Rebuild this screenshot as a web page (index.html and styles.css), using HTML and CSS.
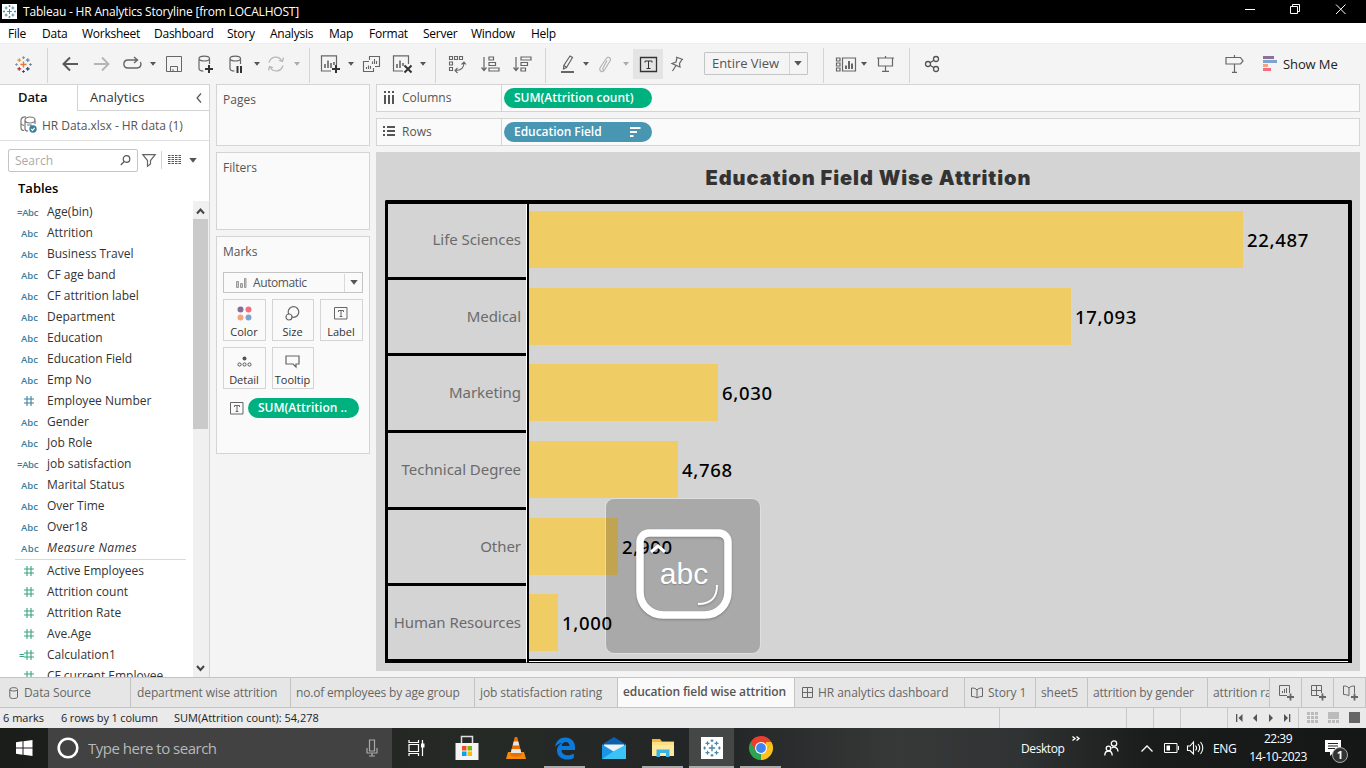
FILE: index.html
```html
<!DOCTYPE html>
<html lang="en">
<head>
<meta charset="utf-8">
<title>Tableau - HR Analytics Storyline</title>
<link rel="stylesheet" href="styles.css">
</head>
<body>
<svg class="defs" width="0" height="0">
  <symbol id="caret" viewBox="0 0 6 4"><path d="M0 0h6L3 3.8z" fill="currentColor"/></symbol>
  <symbol id="hash" viewBox="0 0 12 12"><path d="M4 1v10M8 1v10M1 4h10M1 8h10" stroke="currentColor" stroke-width="1.1" fill="none"/></symbol>
  <symbol id="tbox" viewBox="0 0 14 13"><path d="M.5.5h12.5v11.5H.5zM4.500 5V3.500h5V5M7 3.500v6M5.700 9.500h2.600" fill="none" stroke="currentColor"/></symbol>
  <symbol id="mark" viewBox="0 0 18 18"><g fill="none" stroke-width="1.200"><path d="M9 5.800v6.400M5.800 9h6.400" stroke="var(--c1)" stroke-width="1.400"/><path d="M4.500 2.300v4M2.500 4.300h4" stroke="var(--c2)"/><path d="M9 .3v2.800M7.600 1.700h2.800M1.600 7.600v2.800M.2 9H3" stroke="var(--c3)"/><path d="M13.500 2.300v4M11.500 4.300h4M16.400 7.600v2.800M15 9h2.800" stroke="var(--c6)"/><path d="M13.500 11.700v4M11.500 13.700h4M9 15v2.800M7.600 16.400h2.800" stroke="var(--c4)"/><path d="M4.500 11.700v4M2.500 13.700h4" stroke="var(--c5)"/></g></symbol>
  <symbol id="cyl" viewBox="0 0 16 19"><path d="M1 3.500C1 .2 11.500.2 11.500 3.500S1 6.800 1 3.500v10c0 2 2 2.500 4.500 2.500M11.500 3.500V9" fill="none" stroke="currentColor" stroke-width="1.200"/></symbol>
</svg>

<header class="titlebar">
  <svg class="app-ico" width="15" height="15" viewBox="-1 -1 20 20"><rect x="-1" y="-1" width="20" height="20" fill="#fff"/><use href="#mark" width="18" height="18"/></svg>
  <span class="title">Tableau - HR Analytics Storyline [from LOCALHOST]</span>
  <svg class="winctl" width="104" height="12" viewBox="0 0 104 12" fill="none" stroke="#fff"><path d="M0 5.500h10M45.500 2.500h7v7h-7zM47.500 2V.5h7v7H53M91 .5l9.500 9.500M100.500.5L91 10"/></svg>
</header>

<nav class="menubar">
  <span>File</span><span>Data</span><span>Worksheet</span><span>Dashboard</span><span>Story</span><span>Analysis</span><span>Map</span><span>Format</span><span>Server</span><span>Window</span><span>Help</span>
</nav>

<div class="toolbar">
  <svg class="logo-color" width="17" height="17"><use href="#mark" width="17" height="17"/></svg>
  <i class="sep"></i>
  <svg width="16" height="16" fill="none" stroke="#595959" stroke-width="2"><path d="M16 8H1M8 1.500L1.500 8 8 14.500"/></svg>
  <svg width="16" height="16" fill="none" stroke="#b4b4b4" stroke-width="1.800"><path d="M0 8h15M8 1.500L14.500 8 8 14.500"/></svg>
  <svg width="19" height="16" fill="none" stroke="#666" stroke-width="1.400"><path d="M14 4H5C-.5 4-.5 12 5 12h9c4 0 4.500-4 3.400-6M11 1l3.500 3L11 7"/></svg>
  <svg class="car"><use href="#caret"/></svg>
  <svg width="16" height="16" fill="none" stroke="#666"><path d="M.5.500h15v15H.5zM4.500 15.500v-5h7v5M7 15.500v-2.500"/></svg>
  <svg width="16" height="19" color="#666"><use href="#cyl"/><path d="M7 14h8M11 10v8" stroke="#333" stroke-width="2"/></svg>
  <svg width="16" height="19" color="#666"><use href="#cyl"/><path d="M8.500 11v7M12 11v7" stroke="#333" stroke-width="2"/></svg>
  <svg class="car"><use href="#caret"/></svg>
  <svg width="18" height="16" fill="none" stroke="#b8b8b8" stroke-width="1.300"><path d="M2 6.500C4-.5 12-.5 15 5M16 9.500c-2 7-10 7-13 1.500M16.500 1.500L15.500 5.500 12 4.500M1.500 14.500L2.500 10.500 6 11.500"/></svg>
  <svg class="car dim"><use href="#caret"/></svg>
  <i class="sep"></i>
  <svg width="19" height="18" fill="none" stroke="#666"><path d="M10 16H.5V.8h15V10" stroke-width="1.200"/><path d="M4 13V9M7 13V5.500M10 13V8M13 10V7" stroke-width="1.600"/><path d="M11 14h8M15 10v8" stroke="#333" stroke-width="2"/></svg>
  <svg class="car"><use href="#caret"/></svg>
  <svg width="18" height="17" fill="none" stroke="#666"><path d="M6.500 4V.5h10v10H12M6 5.500H.5v10h10V12M3.500 13v-2M5.500 13V9.500M7.500 13v-3M9.500 8V5.500M11.500 8V3M13.500 8V5" stroke-width="1.100"/></svg>
  <svg width="19" height="18" fill="none" stroke="#666"><path d="M10 16H.5V.8h15V9" stroke-width="1.200"/><path d="M4 13V9M7 13V5.500M10 11V8" stroke-width="1.600"/><path d="M11.500 10.500l7 7M18.500 10.500l-7 7" stroke="#333" stroke-width="2"/></svg>
  <svg class="car"><use href="#caret"/></svg>
  <i class="sep"></i>
  <svg width="18" height="18" fill="none" stroke="#666" stroke-width="1.100"><path d="M1.500 1.500h3v3h-3zM6.500 1.500h3v3h-3zM11.500 1.500h3v3h-3zM1.500 7h3v3h-3zM1.500 12.500h3v3h-3zM16 7.500c0 5-3 8-8.500 8M13.500 9.500L16 7l2 2.500M9.500 13L7 15.500 9.500 18"/></svg>
  <svg width="19" height="16" fill="none" stroke="#666" stroke-width="1.200"><path d="M3 1v13M.5 11.500L3 14.500 5.500 11.500M8 1h4.500v3H8zM8 6.500h6.500v3H8zM8 12h10v3H8z"/></svg>
  <svg width="19" height="16" fill="none" stroke="#666" stroke-width="1.200"><path d="M3 1v13M.5 11.500L3 14.500 5.500 11.500M8 1h10v3H8zM8 6.500h6.500v3H8zM8 12h4.500v3H8z"/></svg>
  <i class="sep"></i>
  <svg width="14" height="18" fill="none" stroke="#666" stroke-width="1.200"><path d="M9 1l2.500 1.500-6 10L2.500 14l.3-3.500zM3 10.500l2.500 1.800"/><path d="M0 17h13" stroke-width="2"/></svg>
  <svg class="car"><use href="#caret"/></svg>
  <svg width="14" height="17" fill="none" stroke="#b4b4b4" stroke-width="1.200"><path d="M9 4.500l-4 7.500c-1 2 1 3 2 1L12 5c1.500-3-2-5.500-4-2L2.500 11c-2.500 4 2 6 4 3"/></svg>
  <svg class="car dim"><use href="#caret"/></svg>
  <span class="toggled"><svg width="17" height="15" fill="none" stroke="#333"><path d="M.5.5h16v14H.5z" stroke-width="1.300"/><path d="M5 5.500V4h7v1.500M8.500 4v7.500M6.500 11.500h4"/></svg></span>
  <svg width="13" height="16" fill="none" stroke="#666" stroke-width="1.200"><path d="M5 1l7 2.500M6 1.500L5 6 1 7.500l8 3.500-.5-3.500L11 3.500M5 9.500L1.500 15"/></svg>
  <div class="dropdown"><span>Entire View</span><svg class="big"><use href="#caret"/></svg></div>
  <i class="sep"></i>
  <svg width="20" height="15" fill="none" stroke="#666" stroke-width="1.200"><path d="M.5 1h3.500v3H.5zM.5 6h3.500v3H.5zM.5 11h3.500v3H.5zM6.500 1h13v13h-13z"/><path d="M10 12V8.500M13 12V4M16 12V6.500" stroke-width="2"/></svg>
  <svg class="car"><use href="#caret"/></svg>
  <svg width="17" height="16" fill="none" stroke="#666" stroke-width="1.200"><path d="M0 2h17M1.500 2v8h14V2M8.500 0v2M8.500 10v5M5 15.400h7"/></svg>
  <i class="sep"></i>
  <svg width="15" height="16" fill="none" stroke="#555" stroke-width="1.300"><circle cx="3" cy="8" r="2.500"/><circle cx="11" cy="3" r="2.500"/><circle cx="11" cy="13" r="2.500"/><path d="M5 6.800L9 4.300M5 9.200l4 2.500"/></svg>
  <svg width="19" height="18" fill="none" stroke="#666" stroke-width="1.200"><path d="M1 2.500h14.500L18 6l-2.500 3H1zM9.500 0v2.500M9.500 9v8M7 17.400h5"/></svg>
  <div class="showme"><svg width="14" height="15"><path fill="#8a7199" d="M0 0h11v3H0z"/><path fill="#7ea3cf" d="M0 4h14v3H0z"/><path fill="#f4a57a" d="M0 8h5v3H0z"/><path fill="#f76c7e" d="M0 12h8v3H0z"/></svg><span>Show Me</span></div>
</div>

<main class="workspace">
  <aside class="datapane">
    <div class="pane-tabs"><b>Data</b><div>Analytics<svg width="6" height="10" fill="none" stroke="#555" stroke-width="1.200"><path d="M5 .5L1 5l4 4.500"/></svg></div></div>
    <div class="source">
      <svg width="18" height="18" fill="none" stroke="#777" stroke-width="1.200"><path d="M5 4C5 0 15 0 15 4S5 8 5 4M15 4v4M1 4C1 1.500 4 .5 6 1M1 4v8c0 1.500 1.500 2.500 3 2.500M1 7.500c1 1.500 2 1.800 3 2M5 4v9c0 1.500 1.500 2 3 2M7 9h4v4"/><circle cx="13" cy="13" r="3.700" fill="#3a7f9d" stroke="none"/><path d="M11.300 13l1.200 1.300 2.200-2.500" stroke="#fff"/></svg>
      <span>HR Data.xlsx - HR data (1)</span>
    </div>
    <div class="searchrow">
      <div class="searchbox"><span>Search</span><svg width="11" height="11" fill="none" stroke="#555" stroke-width="1.200"><circle cx="6.500" cy="4" r="3.300"/><path d="M4.200 6.500L.8 10"/></svg></div>
      <svg width="14" height="13" fill="none" stroke="#666" stroke-width="1.200"><path d="M.8.700h12.400L8.500 6.500V10L5.500 12.300V6.500z"/></svg>
      <i></i>
      <svg width="13" height="11" stroke="#555" stroke-width="1"><path d="M0 .5h13M0 2.500h13M0 4.500h13M0 6.500h13M0 8.500h13" stroke-dasharray="2.500 1"/></svg>
      <svg class="big"><use href="#caret"/></svg>
    </div>
    <h2>Tables</h2>
    <div class="fields">
      <ul>
        <li><em class="eq">=Abc</em>Age(bin)</li>
        <li><em>Abc</em>Attrition</li>
        <li><em>Abc</em>Business Travel</li>
        <li><em>Abc</em>CF age band</li>
        <li><em>Abc</em>CF attrition label</li>
        <li><em>Abc</em>Department</li>
        <li><em>Abc</em>Education</li>
        <li><em>Abc</em>Education Field</li>
        <li><em>Abc</em>Emp No</li>
        <li><em><svg class="num"><use href="#hash"/></svg></em>Employee Number</li>
        <li><em>Abc</em>Gender</li>
        <li><em>Abc</em>Job Role</li>
        <li><em class="eq">=Abc</em>job satisfaction</li>
        <li><em>Abc</em>Marital Status</li>
        <li><em>Abc</em>Over Time</li>
        <li><em>Abc</em>Over18</li>
        <li class="italic"><em>Abc</em>Measure Names</li>
        <li class="measure first"><em><svg class="num"><use href="#hash"/></svg></em>Active Employees</li>
        <li class="measure"><em><svg class="num"><use href="#hash"/></svg></em>Attrition count</li>
        <li class="measure"><em><svg class="num"><use href="#hash"/></svg></em>Attrition Rate</li>
        <li class="measure"><em><svg class="num"><use href="#hash"/></svg></em>Ave.Age</li>
        <li class="measure"><em class="eqn">=<svg class="num"><use href="#hash"/></svg></em>Calculation1</li>
        <li class="measure"><em><svg class="num"><use href="#hash"/></svg></em>CF current Employee</li>
      </ul>
      <div class="scroll">
        <svg width="9" height="7" fill="none" stroke="#444" stroke-width="2"><path d="M1 5.500l3.500-4 3.500 4"/></svg>
        <div class="thumb"></div>
        <svg class="down" width="9" height="7" fill="none" stroke="#444" stroke-width="2"><path d="M1 1l3.500 4L8 1"/></svg>
      </div>
    </div>
  </aside>

  <section class="cards">
    <div class="card pages">Pages</div>
    <div class="card filters">Filters</div>
    <div class="card marks">
      <div>Marks</div>
      <div class="marktype"><svg width="11" height="10" fill="#ccc" stroke="#999"><path d="M.5 3.500h2v6h-2zM4.500 5.500h2v4h-2zM8.500.5h1.500v9H8.500z"/></svg><span>Automatic</span><svg class="big"><use href="#caret"/></svg></div>
      <div class="buttons">
        <div><svg width="15" height="15"><circle cx="3.500" cy="3.500" r="3" fill="#866d98"/><circle cx="11.500" cy="3.500" r="3" fill="#f76c7e"/><circle cx="3.500" cy="11.500" r="3" fill="#f4a57a"/><circle cx="11.500" cy="11.500" r="3" fill="#7ea3cf"/></svg>Color</div>
        <div><svg width="15" height="15" fill="none" stroke="#666" stroke-width="1.200"><circle cx="8.500" cy="6" r="5.300"/><circle cx="4" cy="11" r="3" fill="#fafafa"/></svg>Size</div>
        <div><svg width="14" height="15" color="#666"><use href="#tbox" y="1" height="13"/></svg>Label</div>
        <div><svg width="15" height="15" fill="none" stroke="#555"><circle cx="7.500" cy="4.500" r="2" fill="#555" stroke="none"/><circle cx="2.500" cy="10.500" r="1.600"/><circle cx="7.500" cy="10.500" r="1.600"/><circle cx="12.500" cy="10.500" r="1.600"/></svg>Detail</div>
        <div><svg width="15" height="15" fill="none" stroke="#666" stroke-width="1.200"><path d="M1 2h13v8h-3v3l-3-3H1z"/></svg>Tooltip</div>
      </div>
      <div class="markpill"><svg width="14" height="13" color="#666"><use href="#tbox"/></svg><span class="pill">SUM(Attrition ..</span></div>
    </div>
  </section>

  <section class="view">
    <div class="shelf"><div><svg width="12" height="13" stroke="#555" stroke-width="2"><path d="M2 0v2M6 0v2M10 0v2M2 4v9M6 4v9M10 4v9"/></svg>Columns</div><span class="pill">SUM(Attrition count)</span></div>
    <div class="shelf"><div><svg width="12" height="11" stroke="#555" stroke-width="1.800"><path d="M0 1h2M0 5h2M0 9h2M4 1h8M4 5h8M4 9h8"/></svg>Rows</div><span class="pill blue">Education Field<svg width="11" height="11" stroke="#fff" stroke-width="2"><path d="M0 1h10.500M0 5h7M0 9h3.500"/></svg></span></div>
    <div class="chart">
      <h1>Education Field Wise Attrition</h1>
      <div class="frame">
        <div class="heads"><div>Life Sciences</div><div>Medical</div><div>Marketing</div><div>Technical Degree</div><div>Other</div><div>Human Resources</div></div>
        <div class="plot">
          <div><i style="width:714px"></i>22,487</div>
          <div><i style="width:542px"></i>17,093</div>
          <div><i style="width:189px"></i>6,030</div>
          <div><i style="width:149px"></i>4,768</div>
          <div><i style="width:89px"></i>2,900</div>
          <div><i style="width:29px"></i>1,000</div>
        </div>
      </div>
    </div>
  </section>
</main>

<div class="tabs">
  <span><svg width="10" height="12" fill="none" stroke="#666"><path d="M.8 2.500C.8 0 8.500 0 8.500 2.500v7.500c0 2-7.700 2-7.700 0zC.8 4.500 8.500 4.500 8.500 2.500"/></svg>Data Source</span>
  <span>department wise attrition</span>
  <span class="snug">no.of employees by age group</span>
  <span class="job">job statisfaction rating</span>
  <span class="active">education field wise attrition</span>
  <span class="dash"><svg width="11" height="11" fill="none" stroke="#666"><path d="M.5.500h10v10H.5zM5.500.5v10M.5 5.500h10"/></svg>HR analytics dashboard</span>
  <span><svg width="12" height="12" fill="none" stroke="#666"><path d="M6 11V3C5 1.500 3 1 .5 1v8.500c2.500 0 4.500.5 5.500 1.500 1-1 3-1.500 5.500-1.500V1C9 1 7 1.500 6 3"/></svg>Story 1</span>
  <span class="job">sheet5</span>
  <span class="snug">attrition by gender</span>
  <span class="cut">attrition ra</span>
  <span class="add"><svg width="16" height="15" fill="none" stroke="#666"><path d="M8 10.500H.5V.5h10V8M3.500 8V6M5.500 8V4M7.500 8V3"/><path d="M8 12h7M11.500 8.500v7" stroke-width="1.800"/></svg></span>
  <span class="add"><svg width="16" height="15" fill="none" stroke="#666"><path d="M8 10.500H.5V.5h10V8M5.500.5v10M.5 5.500h10"/><path d="M8 12h7M11.500 8.500v7" stroke-width="1.800"/></svg></span>
  <span class="add"><svg width="16" height="15" fill="none" stroke="#666"><path d="M6 10.500V3C5 1.500 3 1 .5 1v8.500c2.500 0 4.500.5 5.500 1.500M11.500 8V1C9 1 7 1.500 6 3"/><path d="M8 12h7M11.500 8.500v7" stroke-width="1.800"/></svg></span>
</div>

<div class="status">
  <span>6 marks</span><span class="rc">6 rows by 1 column</span><span>SUM(Attrition count): 54,278</span>
  <i></i><i></i><i></i><i></i>
  <i class="nav"><svg width="56" height="8" fill="#555"><path d="M0 0h1.300v8H0zM6.500 0v8L2.500 4zM21 0v8L17 4zM33 0l4 4-4 4zM48 0l4 4-4 4zM53 0h1.300v8H53z"/></svg></i>
  <i class="layouts"><svg width="53" height="12"><path fill="#bbb" d="M0 0h3v3H0zM4 0h3v3H4zM8 0h3v3H8zM0 4h3v3H0zM4 4h3v3H4zM8 4h3v3H8zM0 8h3v3H0zM4 8h3v3H4zM8 8h3v3H8zM21 0h11v7H21zM21 8h3v3h-3zM25 8h3v3h-3zM29 8h3v3h-3z"/><path fill="#666" d="M42 0h11v11H42z"/></svg></i>
</div>

<footer class="taskbar">
  <div class="start"><svg width="17" height="16" fill="#fff"><path d="M0 2.300L6.500 1.300V7.500H0zM7.500 1.200L16.500 0V7.500h-9zM0 8.500h6.500v6.200L0 13.700zM7.500 8.500h9V16l-9-1.200z"/></svg></div>
  <div class="tsearch"><svg width="22" height="22" fill="none"><circle cx="11" cy="11" r="9.300" stroke="#fff" stroke-width="2.600"/></svg><span>Type here to search</span><svg width="12" height="18" fill="none" stroke="#aaa" stroke-width="1.200"><path d="M3.500 1h5v11h-5zM1 9v5h10V9M6 14v3M3 17h6"/></svg></div>
  <div class="taskview"><svg width="17" height="16" fill="none" stroke="#fff" stroke-width="1.200"><path d="M1 0v2.500h9.500V0M1 4.500h9.500v7H1zM1 16v-2.500h9.500V16M14.500 0v16"/><path d="M13 3.500h3.500v4H13z" fill="#fff" stroke="none"/></svg></div>
  <div class="app"><svg width="24" height="26" viewBox="0 0 24 26"><path d="M6.500 8V1.500h11V8" fill="none" stroke="#ddd" stroke-width="1.500"/><path d="M.5 8h23v17H.5z" fill="#f4f4f4"/><path fill="#f25022" d="M7 11h4.500v4.500H7z"/><path fill="#7fba00" d="M12.500 11H17v4.500h-4.500z"/><path fill="#00a4ef" d="M7 16.500h4.500V21H7z"/><path fill="#ffb900" d="M12.500 16.500H17V21h-4.500z"/></svg></div>
  <div class="app"><svg width="22" height="24" viewBox="0 0 22 24"><path d="M3 16h16l2 7H1z" fill="#f58a0b"/><path d="M9.800 1h2.400L17 19c-3 2-9 2-12 0z" fill="#e96f05"/><path d="M8.700 5.500h4.600l1 4H7.700zM6.700 13h8.600l1 4H5.700z" fill="#e6e6e6"/></svg></div>
  <div class="app open"><svg width="22" height="23" viewBox="0 0 22 23"><path d="M1 10C2 3.500 6.500.500 11.500.5c6 0 9.500 4.500 9.500 9.500v3H7.500c.3 6 7.500 6.500 12.300 3.500v4.500C13 24.500 3 22 3 13.500 3 10 5.500 7 8.500 5.800 5.500 6 2.500 8 1 10zm6.700-1h7.800c0-5.500-7.500-5-7.800 0z" fill="#0a7bdc"/></svg></div>
  <div class="app"><svg width="24" height="24" viewBox="0 0 24 24"><path d="M0 8.500L12 1l12 7.500V12H0z" fill="#0a61ad"/><path d="M2 8.500h20V14l-10 4-10-4z" fill="#f2f2f2"/><path d="M0 8.500L24 23H0z" fill="#1b96e6"/><path d="M24 8.500V23H0l12-8z" fill="#3cc3f5"/></svg></div>
  <div class="app open"><svg width="22" height="20" viewBox="0 0 22 20"><path d="M0 1h8l2 2.500h12V18H0z" fill="#f0b93e"/><path d="M0 6h22v12H0z" fill="#ffe79b"/><path d="M0 4h22v3H0z" fill="#ffdf83"/><path d="M4.500 19v-7.500h13V19H14v-4H8v4z" fill="#38b3ea"/></svg></div>
  <div class="app open current"><svg width="22" height="22" viewBox="-2 -2 22 22"><rect x="-2" y="-2" width="22" height="22" fill="#fff"/><use href="#mark" width="18" height="18"/></svg></div>
  <div class="app open"><svg width="24" height="24" viewBox="0 0 24 24"><path d="M12 12L1.600 6A12 12 0 0 1 22.400 6z" fill="#ea3e2f"/><path d="M12 12L22.400 6A12 12 0 0 1 12 24z" fill="#fcc31e"/><path d="M12 12v12A12 12 0 0 1 1.600 6z" fill="#2da44f"/><path d="M12 6h10.400l-5.200 9zM6.800 15L1.600 6 12 6z" fill="#ea3e2f"/><path d="M17.200 15L12 24l5.200-18h5.200z" fill="#fcc31e"/><circle cx="12" cy="12" r="6" fill="#fff"/><circle cx="12" cy="12" r="4.900" fill="#3f85ee"/></svg></div>
  <div class="tray">
    <span class="desk">Desktop</span>
    <svg class="chev" width="8" height="5" fill="none" stroke="#fff" stroke-width="1.400"><path d="M.5.500l2.500 2-2.500 2M4.500.5l2.500 2-2.500 2"/></svg>
    <svg width="15" height="16" fill="none" stroke="#fff" stroke-width="1.300"><circle cx="10" cy="3.500" r="2.700"/><circle cx="4.500" cy="8.500" r="2.300"/><path d="M7.500 8c3-2 6.500 0 6.500 3.500M.8 15.500c0-6 7.400-6 7.400 0"/></svg>
    <svg width="12" height="7" fill="none" stroke="#fff" stroke-width="1.300"><path d="M.5 6.500L6 1l5.500 5.500"/></svg>
    <svg width="15" height="10" fill="none" stroke="#fff"><path d="M.5.500h12.500v9H.5zM14.500 3v4"/><path d="M2.500 2.500h3.500v5H2.500z" fill="#fff" stroke="none"/></svg>
    <svg width="17" height="14" fill="none" stroke="#fff" stroke-width="1.100"><path d="M.5 5h2.500l3.500-4v12L3 9.500H.5zM8.500 4.500c1.300 1.500 1.300 3.500 0 5M11 3c2.200 2.500 2.200 5.500 0 8M13.500 1c3 3.500 3 8.500 0 12"/></svg>
    <span class="eng">ENG</span>
    <div class="clock"><span>22:39</span><span>14-10-2023</span></div>
    <div class="note"><svg width="16" height="16"><path d="M0 0h16v12H9l-4 4v-4H0z" fill="#fff"/><path d="M3 3.500h10M3 6h10M3 8.500h7" stroke="#222"/></svg><b>1</b></div>
  </div>
</footer>

<div class="capslock"><svg width="154" height="154" viewBox="0 0 154 154"><path d="M43 34h70a9 9 0 0 1 9 9v50a23 23 0 0 1-23 23H57a23 23 0 0 1-23-23V43a9 9 0 0 1 9-9z" fill="none" stroke="#fff" stroke-width="7.500"/><path d="M45 53l7-6 7 6" fill="none" stroke="#fff" stroke-width="3"/><path d="M92 105c14 0 19-7 19-19" fill="none" stroke="#fff" stroke-width="2"/></svg><span>abc</span></div>
</body>
</html>
```
FILE: styles.css
```css
* { box-sizing: border-box; }
body { margin: 0; width: 1366px; height: 768px; overflow: hidden; display: flex; flex-direction: column; background: #f4f4f4; font: 12px "Open Sans", sans-serif; color: #333; position: relative; --c1: #4a86a8; --c2: #4a86a8; --c3: #4a86a8; --c4: #4a86a8; --c5: #4a86a8; --c6: #4a86a8; }
svg { flex: none; display: block; overflow: visible; }
svg.defs { position: absolute; }
i { font-style: normal; }
span { white-space: nowrap; }

.titlebar { height: 23px; background: #000; color: #fff; display: flex; align-items: center; padding: 0 17px 0 2px; flex: none; }
.title { margin-left: 6px; flex: 1; letter-spacing: -.19px; }
.winctl { margin-bottom: 3px; }

.menubar { height: 20px; background: #fff; color: #000; display: grid; grid-template-columns: 34px 40px 72px 73px 43px 59px 40px 54px 48px 60px 60px; padding-left: 8px; align-items: center; flex: none; letter-spacing: -.25px; padding-top: 1px; }

.toolbar { height: 41px; display: grid; align-items: center; padding: 0 0 0 15px; flex: none; border-top: 1px solid #eee; grid-template-columns: 32px 15px 32px 29px 27px 16px 32px 31px 25px 13px 27px 15px 12px 27px 15px 30px 27px 15px 13px 33px 32px 32px 16px 22px 15px 25px 10px 38px 33px 119px 13px 25px 16px 32px 16px 300px 38px 90px; }
.sep { width: 1px; height: 35px; background: #d4d4d4; margin-top: 3px; }
.logo-color { --c1: #e8762c; --c2: #eb912b; --c3: #7199a6; --c4: #1f447e; --c5: #c72035; --c6: #5b879b; }
.car { width: 6px; height: 4px; color: #555; }
.car.dim { color: #aaa; }
.big { width: 8px; height: 5px; color: #555; }
.toggled { width: 30px; height: 30px; background: #e4e4e4; display: grid; place-items: center; }
.dropdown { width: 104px; height: 23px; border: 1px solid #c4c4c4; display: grid; grid-template-columns: 85px 1fr; align-items: center; font-size: 13px; border-radius: 1px; margin-top: -1px; }
.dropdown span { padding-left: 7px; letter-spacing: -.05px; color: #555; border-right: 1px solid #d4d4d4; line-height: 21px; }
.dropdown .big { margin-left: 4px; }
.showme { display: flex; align-items: center; gap: 6px; font-size: 13px; letter-spacing: -.1px; color: #222; margin-top: -1px; }

.workspace { flex: 1; display: flex; min-height: 0; }
.datapane { width: 210px; border-top: 1px solid #d4d4d4; border-right: 1px solid #d4d4d4; background: #fff; display: flex; flex-direction: column; }
.pane-tabs { display: flex; height: 26px; font-size: 13px; line-height: 25px; flex: none; }
.pane-tabs b { width: 77px; padding-left: 18px; font-weight: 600; color: #111; letter-spacing: -.1px; }
.pane-tabs div { flex: 1; border-left: 1px solid #d4d4d4; border-bottom: 1px solid #d4d4d4; padding: 0 7px 0 12px; display: flex; justify-content: space-between; align-items: center; letter-spacing: .1px; }
.source { height: 30px; border-bottom: 1px solid #e0e0e0; display: flex; align-items: center; padding: 0 0 1px 20px; gap: 4px; flex: none; letter-spacing: -.03px; color: #555; }
.searchrow { display: flex; align-items: center; height: 24px; margin: 7px 0 0 8px; flex: none; }
.searchbox { width: 130px; height: 23px; border: 1px solid #c4c4c4; border-radius: 2px; display: flex; align-items: center; justify-content: space-between; padding: 0 6px; color: #aaa; margin-right: 4px; }
.searchrow > i { width: 1px; height: 18px; background: #d4d4d4; margin: 0 6px 0 5px; }
.searchrow .big { margin-left: 8px; }
.datapane h2 { font-size: 13px; font-weight: 600; margin: 6px 0 0 18px; line-height: 21px; color: #000; flex: none; }
.fields { flex: 1; display: flex; min-height: 0; overflow: hidden; margin-top: 2px; }
.fields ul { list-style: none; margin: 0; padding: 0 0 0 15px; width: 186px; flex: none; overflow: hidden; }
.fields li { height: 21px; line-height: 21px; display: flex; align-items: center; white-space: nowrap; color: #333; letter-spacing: 0; }
.fields em { width: 32px; flex: none; padding-left: 6px; font: 600 9.5px/21px "Open Sans", sans-serif; color: #3a7f9d; display: flex; align-items: center; padding-top: 1px; }
.fields em.eq { padding-left: 2px; letter-spacing: -.3px; }
.fields em.eqn { padding-left: 4px; }
.num { width: 12px; height: 12px; margin-left: 2px; }
.eqn .num { margin-left: -1px; }
.fields .italic { font-style: italic; letter-spacing: .35px; margin-bottom: 1px; }
.fields .measure em { color: #3aa37d; }
.fields .first { border-top: 1px solid #d9d9d9; height: 22px; }
.scroll { width: 16px; margin-left: 7px; background: #f0f0f0; display: flex; flex-direction: column; align-items: center; padding: 7px 1px 5px 0; }
.thumb { width: 15px; height: 210px; background: #cacaca; margin-top: 4px; align-self: flex-start; flex: none; }
.down { margin-top: auto; }

.cards { width: 154px; margin-left: 6px; display: flex; flex-direction: column; gap: 6px; color: #555; }
.card { border: 1px solid #d4d4d4; background: #fafafa; padding: 6px 6px; line-height: 18px; letter-spacing: 0; }
.pages { height: 62px; }
.filters { height: 78px; }
.marks { height: 218px; }
.marktype { height: 21px; width: 140px; border: 1px solid #c4c4c4; display: flex; align-items: center; margin-top: 11px; padding-left: 12px; }
.marktype span { margin-left: 6px; flex: 1; border-right: 1px solid #d9d9d9; margin-right: 5px; letter-spacing: -.55px; font-size: 12px; letter-spacing: -.5px; }
.marktype .big { margin-right: 4px; }
.marktype span { letter-spacing: -.4px; }
.buttons { display: grid; grid-template-columns: 43px 42px 43px; gap: 6px; margin-top: 6px; }
.buttons div { height: 42px; border: 1px solid #d4d4d4; display: flex; flex-direction: column; align-items: center; padding: 6px 1px 0 0; gap: 2px; font-size: 11px; color: #333; line-height: 17px; }
.markpill { display: flex; align-items: center; padding-left: 7px; gap: 4px; margin-top: 9px; }
.pill { background: #00b180; color: #fff; height: 20px; border-radius: 10px; display: flex; align-items: center; justify-content: space-between; padding: 0 11px 0 10px; width: 148px; font-weight: 600; font-size: 12px; letter-spacing: 0; line-height: 20px; }
.markpill .pill { width: 111px; }
.pill.blue { background: #4996b2; letter-spacing: -.05px; }

.view { margin-left: 6px; width: 984px; display: flex; flex-direction: column; gap: 6px; }
.shelf { height: 28px; border: 1px solid #d4d4d4; background: #fafafa; display: flex; align-items: center; flex: none; color: #555; }
.shelf > div { width: 125px; height: 26px; border-right: 1px solid #d4d4d4; display: flex; align-items: center; padding: 0 0 1px 6px; gap: 7px; margin-right: 2px; }
.chart { background: #d4d4d4; height: 519px; padding: 0 8px 0 9px; }
.chart h1 { margin: 0; height: 48px; text-align: center; font: 900 20px/53px Inter, sans-serif; letter-spacing: .93px; color: #333; }
.frame { height: 463px; border: solid #000; border-width: 4px 4px 0 3px; display: grid; grid-template-columns: 138px 1fr; border-radius: 2px 2px 0 0; }
.heads { border-bottom: 4px solid #000; height: 459px; display: grid; grid-template-rows: 76px 76px 77px 77px 76px 73px; }
.heads div { border-bottom: 3px solid #000; text-align: right; padding: 0 5px 0 0; font: 15px/72px "Noto Sans", sans-serif; color: #6b6b6b; letter-spacing: -.05px; }
.heads div:first-child { line-height: 71px; }
.heads div:last-child { border: 0; }
.plot { border-left: 1px solid #fff; border-bottom: 1px solid #000; box-shadow: inset 2px 0 #000, inset 0 -1px #fff, inset 0 -3px #000; padding-left: 3px; display: grid; grid-template-rows: 76px 76px 77px 77px 76px 73px; }
.plot div { display: flex; align-items: center; padding-top: 8px; height: 65px; gap: 4px; color: #000; font: 500 18.5px "Noto Sans", sans-serif; letter-spacing: .65px; margin-left: -1px; }
.plot div:first-child { padding-top: 7px; height: 64px; }
.plot i { height: 57px; background: #f0cd64; flex: none; }

.tabs { height: 31px; flex: none; border-top: 1px solid #c4c4c4; border-bottom: 1px solid #c4c4c4; background: #e6e6e6; display: grid; grid-template-columns: 131px 160px 184px 143px 177px 170px 71px 52px 120px 62px 32px 32px 32px; color: #666; }
.tabs span { border-right: 1px solid #c4c4c4; padding-left: 6px; display: flex; align-items: center; gap: 5px; overflow: hidden; letter-spacing: -.1px; }
.tabs span:first-child { padding-left: 9px; }
.tabs span.snug { letter-spacing: -.18px; padding-left: 5px; }
.tabs span.job { padding-left: 5px; }
.tabs span.dash { padding-left: 7px; letter-spacing: -.05px; }
.tabs .active { background: #fafafa; font-weight: 600; color: #555; letter-spacing: -.12px; padding-bottom: 2px; padding-left: 5px; }
.tabs span.cut { padding-left: 5px; }
.tabs .add { padding-left: 9px; }

.status { height: 20px; background: #eaeaea; flex: none; display: grid; grid-template-columns: 58px 113px 825px 127px 27px 27px 47px 71px 68px; align-items: center; padding-left: 3px; font-size: 11px; color: #222; }
.status span { margin-top: -2px; }
.status .rc { letter-spacing: -.15px; }
.status i { height: 20px; border-left: 1px solid #c8c8c8; }
.status .nav { padding: 6px 0 0 8px; }
.status .layouts { padding: 4px 0 0 8px; }

.taskbar { height: 40px; flex: none; background: linear-gradient(90deg, #1b1d1b 0, #262a26 480px, #232626 720px, #363938 900px, #303333 1020px, #1a1b1b 1150px, #151616); display: flex; align-items: center; color: #fff; }
.start { width: 48px; display: grid; place-items: center; }
.tsearch { width: 344px; height: 40px; background: #424242; display: flex; align-items: center; padding: 0 14px 0 9px; font-size: 15px; color: #b8b8b8; letter-spacing: -.5px; }
.tsearch span { margin-left: 9px; flex: 1; }
.taskview { width: 50px; padding-left: 16px; }
.app { width: 49px; height: 40px; display: grid; place-items: center; }
.open { box-shadow: inset 0 -2px #aaa; margin: 0 4px; width: 41px; }
.current { background: #454747; width: 45px; margin: 0 2px; }
.tray { margin-left: auto; width: 345px; display: grid; align-items: center; grid-template-columns: 51px 32px 37px 23px 23px 26px 35px 77px 41px; }
.desk, .eng { font-size: 12px; letter-spacing: -.4px; }
.chev { margin-bottom: 20px; }
.clock { display: flex; flex-direction: column; align-items: center; width: 60px; font-size: 12px; line-height: 18px; letter-spacing: -.5px; }
.note { position: relative; }
.note b { position: absolute; left: 7px; top: 7px; width: 16px; height: 16px; border-radius: 50%; border: 1px solid #aaa; background: #333; font-size: 11px; line-height: 14px; text-align: center; }

.capslock { position: absolute; left: 606px; top: 499px; width: 154px; height: 154px; border-radius: 8px; background: rgba(0, 0, 0, .2); box-shadow: 0 0 0 1px rgba(255, 255, 255, .25); }
.capslock svg { filter: drop-shadow(0 1px 1px rgba(0, 0, 0, .25)); }
.capslock span { position: absolute; left: 0; right: 0; top: 56px; padding-left: 2px; text-align: center; color: #fff; font: 30px/38px "Liberation Sans", sans-serif; text-shadow: 0 1px 1px #888; }
```
